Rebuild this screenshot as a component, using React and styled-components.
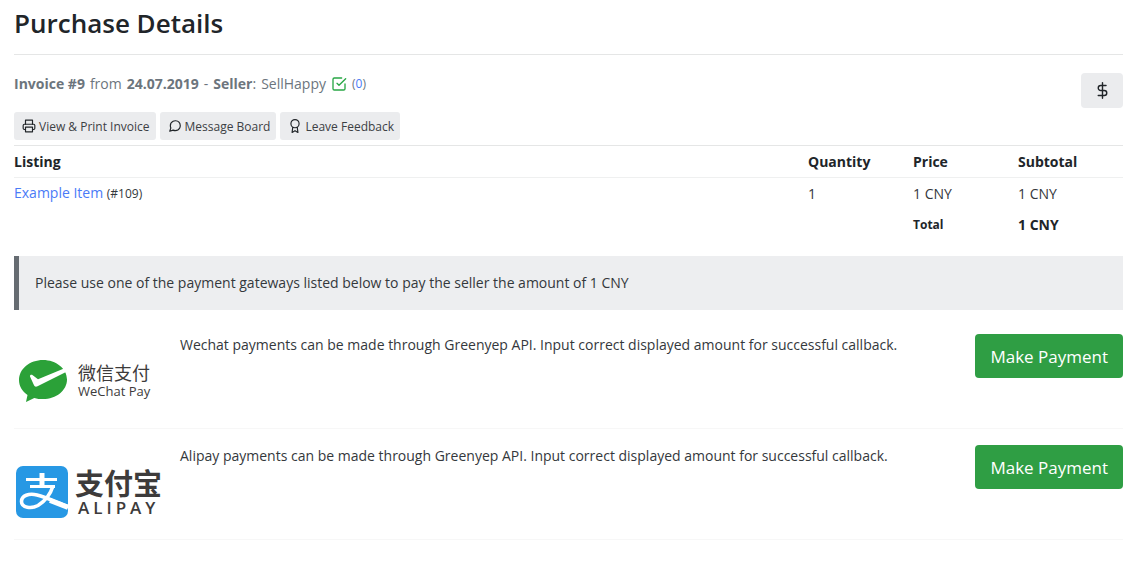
import React from "react";
import styled, { createGlobalStyle } from "styled-components";
import { FiAward, FiCheckSquare, FiDollarSign, FiMessageCircle, FiPrinter } from "react-icons/fi";

const gateways = [
  {
    id: "wechat",
    logo: WechatLogo,
    text: "Wechat payments can be made through Greenyep API. Input correct displayed amount for successful callback.",
  },
  {
    id: "alipay",
    logo: AlipayLogo,
    text: "Alipay payments can be made through Greenyep API. Input correct displayed amount for successful callback.",
  },
];

function WechatLogo() {
  return (
    <Logo $gap={11} $indent={5}>
      <svg width="48" height="44" viewBox="0 0 48 44" aria-hidden="true">
        <path
          fill="#2ba138"
          d="M24 1C11 1 0 9.700 0 21c0 6.300 3.300 11.300 8.500 15L7 43l8.300-4.100c2.700.8 5.600 1.200 8.700 1.200 13.200 0 24-8.700 24-19.600C48 9.500 37 1 24 1z"
        />
        <path
          fill="#fff"
          d="M11 17.500c-.3-1.600 1.300-2.200 2.700-1.300l5.300 4 26-10.700L48 12.500 18.500 27.300c-1.700.8-2.900.3-3.500-1z"
        />
      </svg>
      <LogoText>
        <WechatChinese>微信支付</WechatChinese>
        <WechatLatin>WeChat Pay</WechatLatin>
      </LogoText>
    </Logo>
  );
}

function AlipayLogo() {
  return (
    <Logo $gap={7} $indent={2}>
      <svg width="52" height="52" viewBox="0 0 52 52" aria-hidden="true">
        <rect width="52" height="52" rx="7" fill="#2798e4" />
        <g fill="none" stroke="#fff">
          <path strokeWidth="5" d="M26 7v13" />
          <path strokeWidth="3.200" d="M10 13.500h31M14 20.500h25" />
          <path
            strokeWidth="3.600"
            d="M37 20c-2.500 8-8.500 15.500-15 19.500-6.500 3.500-16.500 2.500-16.500-4 0-6 7.500-8.500 15.500-6.500 10 2.500 20 7.500 31 11.500"
          />
          <path strokeWidth="5" d="M34 34.500l18 7" />
        </g>
      </svg>
      <LogoText>
        <AlipayChinese>支付宝</AlipayChinese>
        <AlipayLatin>ALIPAY</AlipayLatin>
      </LogoText>
    </Logo>
  );
}

function App() {
  return (
    <Page>
      <GlobalStyle />
      <Title>Purchase Details</Title>

      <InvoiceHeader>
        <InvoiceInfo>
          <InvoiceLine>
            <b>Invoice #9</b>
            <span>from</span>
            <b>24.07.2019</b>
            <span>-</span>
            <span>
              <b>Seller</b>:
            </span>
            <span>SellHappy</span>
            <FiCheckSquare size={16} color="#28a745" />
            <Rating>
              (<Link href="#reputation">0</Link>)
            </Rating>
          </InvoiceLine>
          <Actions>
            <ActionButton type="button">
              <FiPrinter size={14} />
              View &amp; Print Invoice
            </ActionButton>
            <ActionButton type="button">
              <FiMessageCircle size={14} />
              Message Board
            </ActionButton>
            <ActionButton type="button">
              <FiAward size={14} />
              Leave Feedback
            </ActionButton>
          </Actions>
        </InvoiceInfo>
        <CurrencyButton type="button" aria-label="Payment">
          <FiDollarSign size={17} />
        </CurrencyButton>
      </InvoiceHeader>

      <Table>
        <thead>
          <tr>
            <HeadCell>Listing</HeadCell>
            <HeadCell $narrow>Quantity</HeadCell>
            <HeadCell $narrow>Price</HeadCell>
            <HeadCell $narrow>Subtotal</HeadCell>
          </tr>
        </thead>
        <tbody>
          <tr>
            <Cell>
              <Link href="#listing">Example Item</Link> <Small>(#109)</Small>
            </Cell>
            <Cell>1</Cell>
            <Cell>1 CNY</Cell>
            <Cell>1 CNY</Cell>
          </tr>
          <tr>
            <Cell colSpan={2} />
            <TotalCell>
              <Small>Total</Small>
            </TotalCell>
            <TotalCell>1 CNY</TotalCell>
          </tr>
        </tbody>
      </Table>

      <Notice>
        Please use one of the payment gateways listed below to pay the seller the amount of 1 CNY
      </Notice>

      {gateways.map(({ id, logo: GatewayLogo, text }) => (
        <Gateway key={id}>
          <LogoBox>
            <GatewayLogo />
          </LogoBox>
          <Description>{text}</Description>
          <PayButton type="button">Make Payment</PayButton>
        </Gateway>
      ))}
    </Page>
  );
}

export default App;

// --- Styled Components ---

const GlobalStyle = createGlobalStyle`
  * {
    box-sizing: border-box;
  }

  body {
    margin: 0;
    background-color: #fff;
    color: #34383c;
    font-family: "Open Sans", "Noto Sans CJK SC", sans-serif;
    font-size: 14px;
    line-height: 22px;
  }
`;

const Page = styled.main`
  padding: 4px 24px 0 14px;
`;

const Title = styled.h1`
  margin: 0;
  padding-bottom: 12px;
  border-bottom: 1px solid #e5e6e6;
  color: #212529;
  font-size: 26px;
  font-weight: 600;
  line-height: 38px;
`;

const InvoiceHeader = styled.header`
  display: flex;
  align-items: flex-start;
  justify-content: space-between;
  padding: 18px 0 5px;
`;

const InvoiceInfo = styled.div`
  display: flex;
  flex-direction: column;
  gap: 17px;
`;

const InvoiceLine = styled.div`
  display: flex;
  align-items: center;
  gap: 5px;
  color: #6c757d;
`;

const Rating = styled.span`
  font-size: 12px;
`;

const Link = styled.a`
  color: #4a7bf7;
  text-decoration: none;
`;

const Actions = styled.div`
  display: flex;
  gap: 4px;
`;

const ActionButton = styled.button`
  display: flex;
  align-items: center;
  gap: 3px;
  height: 28px;
  padding: 0 6px 0 8px;
  border: 0;
  border-radius: 3px;
  background-color: #ebecee;
  color: #3c4044;
  font-family: inherit;
  font-size: 12px;

  svg {
    color: #212529;
  }
`;

const CurrencyButton = styled.button`
  display: flex;
  align-items: center;
  justify-content: center;
  width: 42px;
  height: 35px;
  padding: 0;
  border: 0;
  border-radius: 4px;
  background-color: #ebecee;
  color: #212529;
`;

const Table = styled.table`
  width: 100%;
  border-collapse: collapse;
  border-top: 1px solid #e5e6e6;
`;

const HeadCell = styled.th`
  width: ${({ $narrow }) => ($narrow ? "105px" : "auto")};
  padding: 5px 0 4px;
  border-bottom: 1px solid #eff0f0;
  color: #212529;
  font-weight: 700;
  text-align: left;
`;

const Cell = styled.td`
  padding: 4px 0;
`;

const TotalCell = styled(Cell)`
  color: #212529;
  font-weight: 700;
`;

const Small = styled.span`
  font-size: 12px;
`;

const Notice = styled.div`
  margin-top: 16px;
  margin-bottom: 8px;
  padding: 16px;
  border-left: 5px solid #666c72;
  background-color: #edeef0;
`;

const Gateway = styled.section`
  display: flex;
  align-items: flex-start;
  padding-top: 16px;
  border-bottom: 1px solid #f7f7f7;
`;

const LogoBox = styled.div`
  display: flex;
  align-items: center;
  flex: none;
  width: 166px;
  height: 94px;
`;

const Description = styled.p`
  flex: 1;
  margin: 0;
`;

const PayButton = styled.button`
  height: 44px;
  padding: 0 15px;
  border: 0;
  border-radius: 4px;
  background-color: #2f9e44;
  color: #fff;
  font-family: inherit;
  font-size: 17px;
`;

const Logo = styled.div`
  display: flex;
  align-items: center;
  gap: ${({ $gap }) => $gap}px;
  padding-left: ${({ $indent }) => $indent}px;
`;

const LogoText = styled.div`
  display: flex;
  flex-direction: column;
  color: #3d3b3b;
`;

const WechatChinese = styled.span`
  font-family: "Noto Sans CJK SC", sans-serif;
  font-size: 18px;
  line-height: 20px;
`;

const WechatLatin = styled.span`
  font-size: 13px;
  line-height: 18px;
`;

const AlipayChinese = styled.span`
  font-family: "Noto Sans CJK SC", sans-serif;
  font-size: 29px;
  font-weight: 700;
  line-height: 32px;
`;

const AlipayLatin = styled.span`
  padding-left: 3px;
  font-size: 17px;
  font-weight: 600;
  letter-spacing: 4px;
  line-height: 20px;
`;
